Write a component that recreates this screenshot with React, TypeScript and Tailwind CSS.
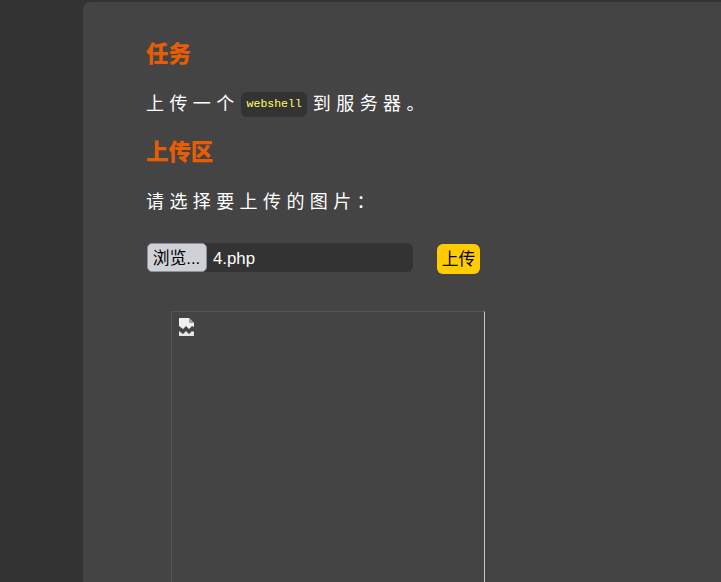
const cjk = "font-['Liberation_Sans','Noto_Sans_CJK_SC',sans-serif]";

function BrokenImage() {
  return (
    <svg width="16" height="18" viewBox="0 0 16 18" className="block">
      <path d="M0 0h10l5 5v4l-2-1-3 3-3-3-3 3-4-3z" fill="#f0f0f0" />
      <path d="M10 0v5h5z" fill="#a0a0a0" />
      <path d="M0 13l4 3 3-3 3 3 3-3 2 1v4H0z" fill="#e4e4e4" />
    </svg>
  );
}

export default function App() {
  return (
    <div className={`${cjk} h-[582px] overflow-hidden bg-[#333333] pl-[83px] pt-[2px]`}>
      <div className="h-[640px] rounded-tl-[7px] bg-[#444444] pl-[64px] pt-[38px]">
        <h2 className="-ml-px h-[30px] text-[22.4px] font-black leading-[30px] text-[#e85d04]">任务</h2>
        <div className="-ml-px mt-[20px] flex h-[28px] items-center text-[18px] leading-[28px] tracking-[5.4px] text-white">
          <span>上传一个</span>
          <code className="mx-[1.5px] flex h-[25px] items-center rounded-[6px] bg-[#333333] px-[5.5px] font-['Liberation_Mono',monospace] text-[11.5px] font-normal tracking-normal text-[#ffff66]">
            webshell
          </code>
          <span className="ml-[4px]">到服务器。</span>
        </div>
        <h2 className="-ml-px mt-[20px] h-[30px] text-[22.4px] font-black leading-[30px] text-[#e85d04]">上传区</h2>
        <p className="-ml-px mt-[20px] h-[28px] text-[18px] leading-[28px] tracking-[5.4px] text-white">请选择要上传的图片：</p>
        <div className="mt-[27px] flex items-start">
          <div className="flex h-[29px] w-[266px] items-center rounded-[6px] bg-[#333333] text-[16.8px] text-white">
            <button className="h-[29px] w-[60px] shrink-0 rounded-[5px] border border-[#8f8f9d] bg-[#d0d0d7] pt-[2px] pr-[1px] text-[16.8px] text-black">
              浏览...
            </button>
            <span className="ml-[6px] pt-[2px]">4.php</span>
          </div>
          <button className="ml-[24px] mt-[1px] h-[30px] w-[43px] rounded-[6px] bg-[#ffcc00] pt-[1px] text-[16.8px] text-black">
            上传
          </button>
        </div>
        <div className="ml-[24px] mt-[37px] h-[400px] w-[314px] border-t border-l border-r border-t-[#555555] border-l-[#555555] border-r-[#c8c8c8] pl-[7px] pt-[6px]">
          <BrokenImage />
        </div>
      </div>
    </div>
  );
}
